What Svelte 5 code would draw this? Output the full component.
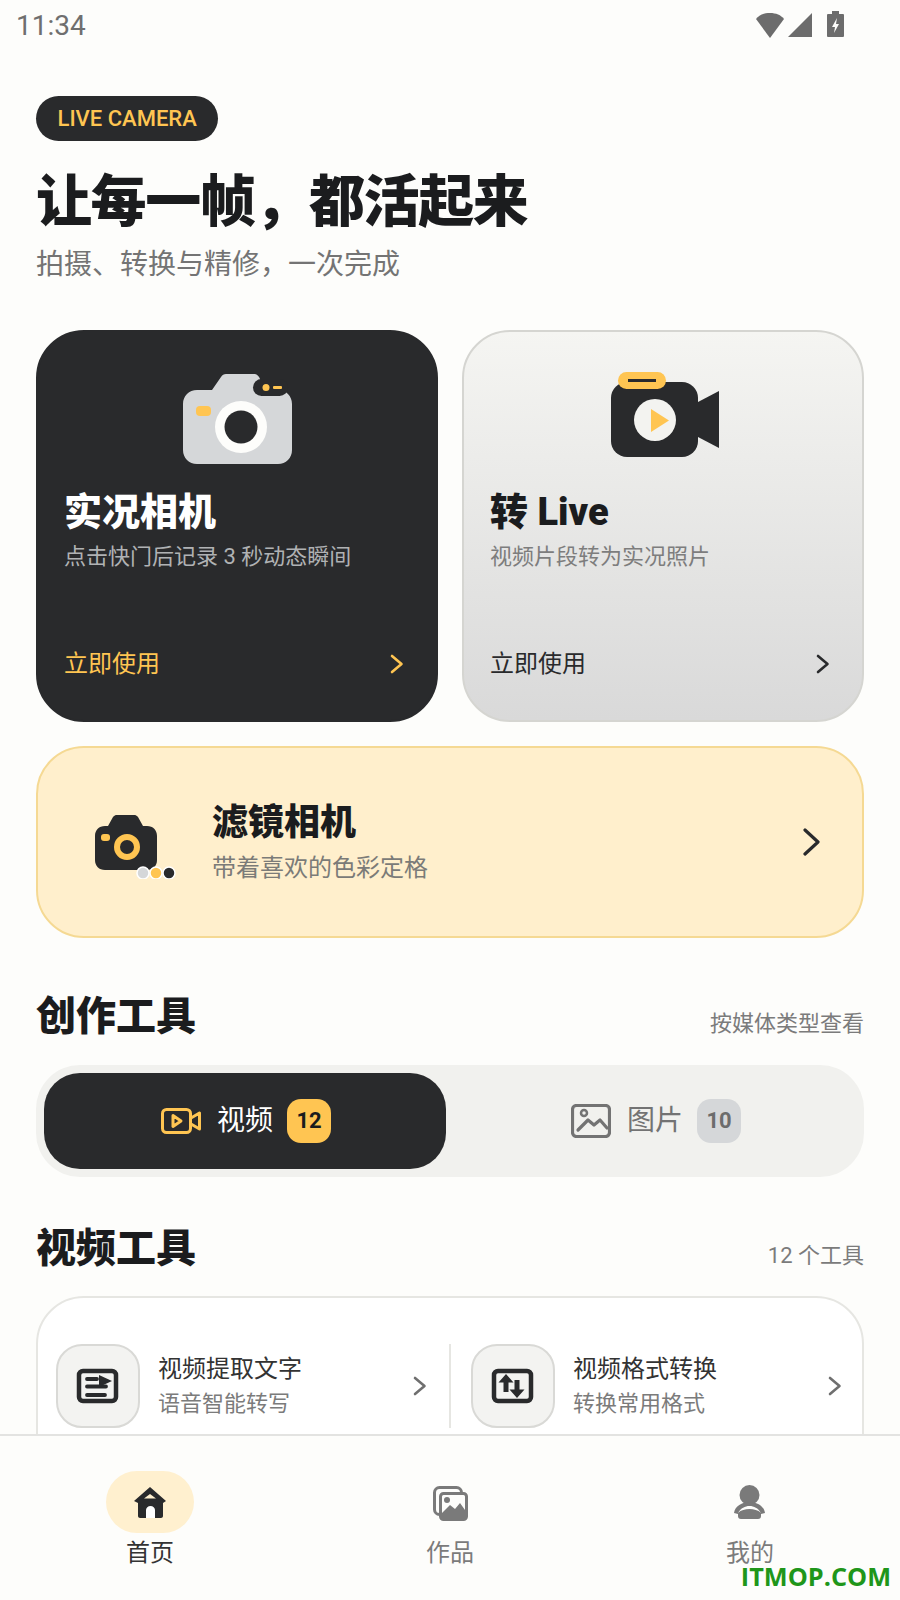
<script>
  const tools = [
    { title: '视频提取文字', sub: '语音智能转写', kind: 'text' },
    { title: '视频格式转换', sub: '转换常用格式', kind: 'convert' }
  ]
  const nav = [
    { label: '首页', kind: 'home', active: true },
    { label: '作品', kind: 'works', active: false },
    { label: '我的', kind: 'me', active: false }
  ]
</script>

{#snippet chevron(cls)}
  <svg class={cls} width="14" height="20" viewBox="0 0 14 20" fill="none">
    <path d="M2 2l9.5 8L2 18" stroke="currentColor" stroke-width="2.6" stroke-linecap="round" stroke-linejoin="round" />
  </svg>
{/snippet}

<div class="page">
  <div class="status">
    <span class="time">11:34</span>
    <div class="status-icons">
      <svg width="30" height="26" viewBox="0 0 30 26"><path d="M15 26L1 7C4 3 9 1 15 1s11 2 14 6z" fill="#6c6c6c" /></svg>
      <svg width="26" height="26" viewBox="0 0 26 26"><path d="M25 1v24H1z" fill="#6c6c6c" /></svg>
      <svg class="battery" width="17" height="26" viewBox="0 0 17 26">
        <path d="M5 0h7v3h4a1 1 0 0 1 1 1v21a1 1 0 0 1-1 1H1a1 1 0 0 1-1-1V4a1 1 0 0 1 1-1h4z" fill="#6c6c6c" />
        <path d="M10 7l-5 9h3l-1 6 5-9H9z" fill="#fdfdfb" />
      </svg>
    </div>
  </div>

  <main>
    <div class="pill">LIVE CAMERA</div>
    <h1>让每一帧，都活起来</h1>
    <p class="lead">拍摄、转换与精修，一次完成</p>

    <div class="cards">
      <section class="card dark">
        <svg class="art" width="120" height="100" viewBox="0 0 120 100">
          <path d="M20 22h15l9-13c1-2 3-3 5-3h28c3 0 5 2 6 5l3 11h15c8 0 14 6 14 14v46c0 8-6 14-14 14H20C12 96 6 90 6 82V36c0-8 6-14 14-14z" fill="#d5d7d9" />
          <rect x="76" y="11" width="35" height="17" rx="8.5" fill="#292a2c" />
          <circle cx="89" cy="19.500" r="3.500" fill="#ffc552" />
          <rect x="96" y="18" width="9" height="3" rx="1" fill="#ffc552" />
          <rect x="19" y="38" width="15" height="10" rx="4" fill="#ffc552" />
          <circle cx="64" cy="59" r="26" fill="#fdfdfb" />
          <circle cx="64" cy="59" r="16.500" fill="#292a2c" />
        </svg>
        <h2>实况相机</h2>
        <p class="desc">点击快门后记录 3 秒动态瞬间</p>
        <div class="go"><span>立即使用</span>{@render chevron('')}</div>
      </section>

      <section class="card light">
        <svg class="art" width="120" height="100" viewBox="0 0 120 100">
          <rect x="8" y="14" width="87" height="75" rx="16" fill="#292a2c" />
          <path d="M95 34l21-11v57L95 69z" fill="#292a2c" />
          <rect x="15" y="4" width="48" height="17" rx="8.500" fill="#ffc552" />
          <rect x="25" y="11" width="28" height="3" fill="#292a2c" />
          <circle cx="52" cy="52" r="21" fill="#f3f3f0" />
          <path d="M48 41l18 11.500L48 64z" fill="#ffc552" />
        </svg>
        <h2>转 Live</h2>
        <p class="desc">视频片段转为实况照片</p>
        <div class="go"><span>立即使用</span>{@render chevron('')}</div>
      </section>
    </div>

    <section class="filter">
      <svg width="90" height="72" viewBox="0 0 90 72">
        <path d="M15 19h3l5-9c1-1 2-2 3-2h19c1 0 2 1 3 2l5 9h4c6 0 10 4 10 10v24c0 6-4 10-10 10H15C9 63 5 59 5 53V29c0-6 4-10 10-10z" fill="#292a2c" />
        <rect x="11" y="27" width="9" height="7" rx="3" fill="#ffc552" />
        <circle cx="37" cy="40" r="10" fill="#292a2c" stroke="#ffc552" stroke-width="6" />
        <circle cx="53" cy="66" r="6" fill="#d5d7d9" stroke="#fff" stroke-width="1.500" />
        <circle cx="66" cy="66" r="6" fill="#ffc552" stroke="#fff" stroke-width="1.500" />
        <circle cx="79" cy="66" r="6" fill="#292a2c" stroke="#fff" stroke-width="1.500" />
      </svg>
      <div class="filter-text">
        <h3>滤镜相机</h3>
        <p>带着喜欢的色彩定格</p>
      </div>
      <svg class="filter-go" width="20" height="28" viewBox="0 0 20 28" fill="none">
        <path d="M3 2l13 12L3 26" stroke="#292a2c" stroke-width="3.200" stroke-linecap="round" stroke-linejoin="round" />
      </svg>
    </section>

    <div class="head first">
      <h4>创作工具</h4>
      <span>按媒体类型查看</span>
    </div>

    <div class="tabs">
      <div class="tab on">
        <svg width="40" height="26" viewBox="0 0 40 26" fill="none" stroke="#ffc552" stroke-width="3" stroke-linejoin="round">
          <rect x="1.500" y="1.500" width="28" height="23" rx="4" />
          <path d="M12 7.500l8 5.500-8 5.500zM30 10l8.500-5v16L30 16" />
        </svg>
        <span class="tab-name">视频</span>
        <b class="count">12</b>
      </div>
      <div class="tab">
        <svg width="40" height="34" viewBox="0 0 40 34" fill="none" stroke="#737373" stroke-width="3.200" stroke-linejoin="round" stroke-linecap="round">
          <rect x="1.500" y="1.500" width="37" height="31" rx="4" />
          <circle cx="13" cy="9" r="3" stroke-width="2.500" />
          <path d="M7 26l10-10 6 5 6-5 7 8" />
        </svg>
        <span class="tab-name">图片</span>
        <b class="count">10</b>
      </div>
    </div>

    <div class="head">
      <h4>视频工具</h4>
      <span>12 个工具</span>
    </div>

    <div class="tools">
      {#each tools as tool}
        <div class="tool">
          <div class="tool-icon">
            <svg width="44" height="38" viewBox="0 0 44 38" fill="none" stroke="#292a2c">
              <rect x="3" y="4" width="37" height="30" rx="4" stroke-width="4.500" />
              {#if tool.kind === 'text'}
                <path d="M11 12h10M11 19.500h19M11 28h18" stroke-width="3.800" stroke-linecap="round" />
                <path d="M23 8l13 6-13 6z" fill="#292a2c" stroke="none" />
              {:else}
                <path d="M15 7l7.500 8.500H17.500V25h-5v-9.500H7.500z" fill="#292a2c" stroke="none" />
                <path d="M26 31l-7.500-8.500h5V13h5v9.500h5z" fill="#292a2c" stroke="none" />
              {/if}
            </svg>
          </div>
          <div class="tool-text">
            <strong>{tool.title}</strong>
            <small>{tool.sub}</small>
          </div>
          {@render chevron('tool-go')}
        </div>
      {/each}
    </div>
  </main>

  <nav>
    {#each nav as item}
      <div class="nav-item" class:active={item.active}>
        <div class="nav-icon">
          {#if item.kind === 'home'}
            <svg width="40" height="40" viewBox="0 0 40 40">
              <path d="M20 5l16 14-3 2v13c0 1-1 2-2 2H10c-1 0-2-1-2-2V21l-4-2z" fill="#292a2c" />
              <path d="M20 12l6 4.500H14z" fill="#fff0cf" />
              <path d="M16 36v-8c0-2 2-4 4.500-4s4.500 2 4.500 4v8z" fill="#fff" />
            </svg>
          {:else if item.kind === 'works'}
            <svg width="40" height="40" viewBox="0 0 40 40" fill="none" stroke="#7a7a7a" stroke-width="3">
              <rect x="4.500" y="5.500" width="27" height="27" rx="5" />
              <rect x="10.500" y="11.500" width="26" height="26" rx="3" fill="#fdfdfb" />
              <circle cx="17" cy="18" r="3" fill="#7a7a7a" stroke="none" />
              <path d="M12 31l8-8 5 4 5-6 5 7v8H12z" fill="#7a7a7a" stroke="none" />
            </svg>
          {:else}
            <svg width="40" height="40" viewBox="0 0 40 40">
              <circle cx="19.500" cy="13" r="10" fill="#7a7a7a" />
              <path d="M4 31c1-7 8-11 15.500-11S34 24 35 31l-4 1v2c0 2-1 3-3 3H11c-2 0-3-1-3-3v-2z" fill="#7a7a7a" />
              <path d="M8 31c3-5 7-7 11.500-7S28 26 31 31c-3-3-7-4-11.500-4S11 28 8 31z" fill="#fdfdfb" />
            </svg>
          {/if}
        </div>
        <span>{item.label}</span>
      </div>
    {/each}
  </nav>

  <div class="watermark">ITMOP.COM</div>
</div>

<style>
  :global(body) {
    margin: 0;
    background: #fdfdfb;
  }
  .page {
    position: relative;
    height: 1600px;
    display: flex;
    flex-direction: column;
    overflow: hidden;
    background: #fdfdfb;
    font-family: Roboto, 'Noto Sans CJK SC', sans-serif;
    color: #1b1c1e;
  }
  h1, h2, h3, h4, p {
    margin: 0;
  }
  .status {
    flex: none;
    height: 50px;
    display: flex;
    align-items: center;
    justify-content: space-between;
    padding: 0 56px 0 16px;
  }
  .time {
    font-size: 28px;
    color: #6f6f6f;
  }
  .status-icons {
    display: flex;
    align-items: center;
    gap: 2px;
  }
  .battery {
    margin-left: 12px;
    margin-top: -3px;
  }
  main {
    flex: 1;
    min-height: 0;
    overflow: hidden;
    padding: 46px 36px 0;
  }
  .pill {
    width: fit-content;
    height: 45px;
    line-height: 45px;
    padding: 0 21.5px;
    border-radius: 23px;
    background: #292a2c;
    color: #ffc552;
    font-size: 22px;
    font-weight: 500;
  }
  h1 {
    margin-top: 27px;
    padding-top: 4px;
    font-size: 56px;
    line-height: 60px;
    font-weight: 900;
    letter-spacing: -1.4px;
  }
  .lead {
    margin-top: 12px;
    padding-top: 2px;
    font-size: 28px;
    line-height: 38px;
    color: #747474;
  }
  .cards {
    margin-top: 46px;
    display: grid;
    grid-template-columns: 1fr 1fr;
    gap: 24px;
  }
  .card {
    box-sizing: border-box;
    height: 392px;
    display: flex;
    flex-direction: column;
    padding: 36px 32px 38px 26px;
    border-radius: 48px;
    border: 2px solid;
  }
  .art {
    display: block;
    align-self: center;
    flex: none;
    margin-left: 6px;
  }
  .dark {
    background: #292a2c;
    border-color: #292a2c;
    color: #fff;
  }
  .light {
    background: linear-gradient(#f5f5f2, #d9d9d9);
    border-color: #d5d5d1;
  }
  h2 {
    margin-top: 17px;
    padding-top: 4px;
    font-size: 38px;
    line-height: 46px;
    font-weight: 900;
  }
  .desc {
    margin-top: 4px;
    padding-top: 2px;
    font-size: 22px;
    line-height: 32px;
    color: #7d7d7d;
  }
  .dark .desc {
    color: #b0b2b4;
  }
  .go {
    margin-top: auto;
    display: flex;
    align-items: center;
    justify-content: space-between;
    font-size: 24px;
    line-height: 36px;
    color: #292a2c;
  }
  .dark .go {
    color: #ffc552;
  }
  .filter {
    box-sizing: border-box;
    height: 192px;
    margin-top: 24px;
    display: flex;
    align-items: center;
    padding: 0 40px 0 52px;
    border-radius: 48px;
    border: 2px solid #f5d993;
    background: #ffefcc;
  }
  .filter svg:first-child {
    flex: none;
    margin-top: 2px;
  }
  .filter-text {
    flex: 1;
    margin-left: 32px;
  }
  h3 {
    font-size: 36px;
    line-height: 48px;
    font-weight: 900;
  }
  .filter-text p {
    margin-top: 4px;
    font-size: 24px;
    line-height: 34px;
    color: #7b7b78;
  }
  .head {
    margin-top: 42px;
    display: flex;
    align-items: flex-end;
    justify-content: space-between;
  }
  .head.first {
    margin-top: 49px;
  }
  h4 {
    padding-top: 4px;
    font-size: 40px;
    line-height: 52px;
    font-weight: 900;
  }
  .head span {
    padding-bottom: 4px;
    font-size: 22px;
    line-height: 30px;
    color: #7b7b7b;
  }
  .tabs {
    margin-top: 22px;
    height: 112px;
    box-sizing: border-box;
    padding: 8px;
    display: grid;
    grid-template-columns: 1fr 1fr;
    gap: 8px;
    border-radius: 44px;
    background: #f1f1ee;
  }
  .tab {
    display: flex;
    align-items: center;
    justify-content: center;
    padding-left: 2px;
    border-radius: 36px;
    color: #737373;
  }
  .tab.on {
    background: #292a2c;
    color: #fff;
  }
  .tab-name {
    margin: 0 14px 0 16px;
    font-size: 28px;
    line-height: 40px;
  }
  .count {
    width: 44px;
    height: 44px;
    line-height: 44px;
    text-align: center;
    border-radius: 14px;
    background: #d5d7d9;
    color: #6c6c6c;
    font-size: 22px;
    font-weight: 700;
  }
  .on .count {
    background: #ffc552;
    color: #1b1c1e;
  }
  .tools {
    margin-top: 21px;
    height: 200px;
    padding-top: 46px;
    box-sizing: border-box;
    display: grid;
    grid-template-columns: 413px 1fr;
    align-items: start;
    border: 2px solid #e6e6e2;
    border-radius: 48px;
    background: #fff;
  }
  .tool {
    box-sizing: border-box;
    height: 84px;
    display: flex;
    align-items: center;
    padding: 0 20px;
  }
  .tool:first-child {
    padding: 0 22px 0 18px;
    border-right: 2px solid #e6e6e2;
  }
  .tool-icon {
    flex: none;
    box-sizing: border-box;
    width: 84px;
    height: 84px;
    display: flex;
    align-items: center;
    justify-content: center;
    border-radius: 26px;
    border: 2px solid #d9d9d6;
    background: #f3f3f1;
  }
  .tool-text {
    flex: 1;
    margin-left: 18px;
    display: flex;
    flex-direction: column;
  }
  strong {
    font-size: 24px;
    line-height: 34px;
    font-weight: 400;
    color: #333;
  }
  small {
    margin-top: 2px;
    font-size: 22px;
    line-height: 32px;
    color: #7b7b7b;
  }
  .tool :global(.tool-go) {
    color: #6f6f6f;
  }
  nav {
    flex: none;
    box-sizing: border-box;
    height: 166px;
    display: grid;
    grid-template-columns: repeat(3, 300px);
    border-top: 2px solid #e3e3e1;
    background: #fdfdfb;
  }
  .nav-item {
    display: flex;
    flex-direction: column;
    align-items: center;
    padding-top: 35px;
    font-size: 24px;
    line-height: 34px;
    color: #7b7b7b;
  }
  .nav-item.active {
    color: #333;
  }
  .nav-icon {
    width: 88px;
    height: 62px;
    display: flex;
    align-items: center;
    justify-content: center;
    border-radius: 31px;
    margin-bottom: 3px;
  }
  .active .nav-icon {
    background: #fff0cf;
  }
  .watermark {
    position: absolute;
    right: 9px;
    bottom: 9px;
    font-family: 'Open Sans', sans-serif;
    font-size: 25.3px;
    line-height: 30px;
    font-weight: 700;
    color: #1f961a;
  }
</style>
